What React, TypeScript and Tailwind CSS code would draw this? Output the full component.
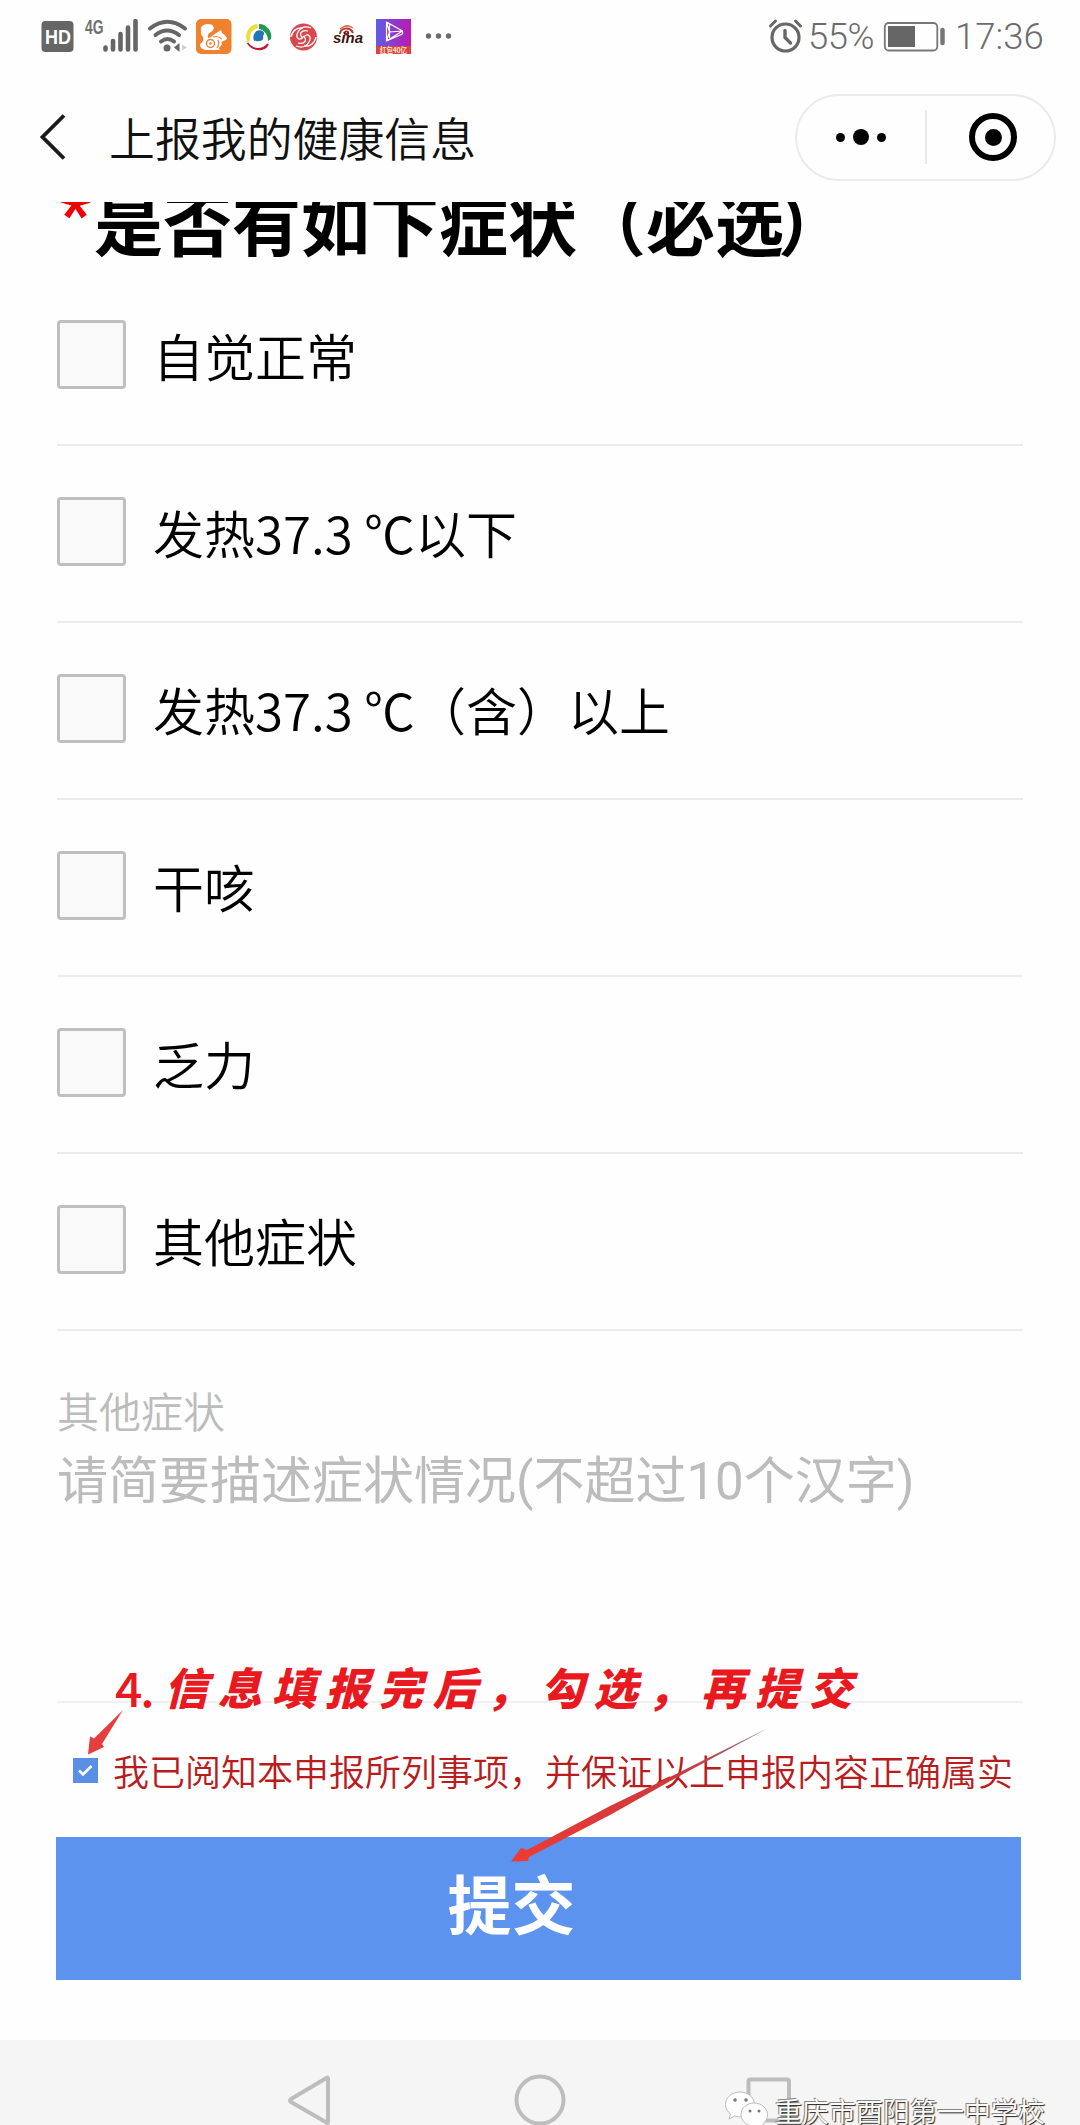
import React from 'react';

const SYMPTOMS = [
  '自觉正常',
  '发热37.3 ℃以下',
  '发热37.3 ℃（含）以上',
  '干咳',
  '乏力',
  '其他症状',
];

const StatusBar: React.FC = () => (
  <div className="h-[72px] shrink-0 flex items-start justify-between pl-[40px] pr-[34px]">
    <svg width="416" height="72" viewBox="40 0 416 72" fill="none">
      {/* HD */}
      <rect x="41.5" y="21" width="32" height="31" rx="4" fill="#666" />
      <text x="45" y="44" fontFamily="Liberation Sans" fontWeight="700" fontSize="21" fill="#fff" textLength="26" lengthAdjust="spacingAndGlyphs">HD</text>

      {/* Signal */}
      <text x="85" y="33.5" fontFamily="Liberation Sans" fontWeight="700" fontSize="20" fill="#707070" textLength="18.5" lengthAdjust="spacingAndGlyphs">4G</text>
      <g stroke="#666" strokeWidth="4.6" strokeLinecap="round">
        <path d="M105.5 47.5v2M113 41v8.5M120.500 34v15.500M128 27.500v22M135.500 21v28.500" />
      </g>

      {/* Wifi */}
      <g stroke="#666" strokeWidth="4" strokeLinecap="round">
        <path d="M150 28.500q17.500-13.500 35 0" />
        <path d="M155.500 35q11.500-9 23.500 0" />
        <path d="M161 41.500q6.500-5 13 0" />
      </g>
      <circle cx="167" cy="48" r="3.500" fill="#666" />
      <path d="M179.500 43v9l-5.500-4.500z" fill="#666" />
      <path d="M182 44.500v6l5-3z" fill="#d0d0d0" />

      {/* Squirrel browser */}
      <rect x="196" y="19" width="35.500" height="35" rx="5" fill="#ef812f" />
      <path d="M201 31c-1-4 2-7 7-7 5 0 7 3 5 6-1 2-4 2-5 5-1 3 1 4 3 2 3-3 7-5 10-7l1 3c3 2 5 4 5 6-2 2-4 1.500-5.500 3 1 3-1 4.500-3 6l1.500 2h-14c-4-.500-6.500-3-6-6 3-2 4-4 3-7-2-2-2.500-4-2-6z" fill="#fff" />
      <circle cx="210.500" cy="43.500" r="4" stroke="#ef812f" strokeWidth="1.400" />
      <circle cx="210.500" cy="43.500" r="1.300" fill="#ef812f" />
      <path d="M213 37c3-1 6-.500 9 2M218 40c1.500 3 1 5-1 8" stroke="#ef812f" strokeWidth="1.200" />

      {/* Three colour ring */}
      <path d="M247 42c-3-9 2-17 10-18l1 4c-6 1-9 7-8 13z" fill="#ecdf3c" />
      <path d="M259 24c8 0 14 8 12 15l-3 2c0-7-4-11-9-12z" fill="#259653" />
      <path d="M247.500 43c6 8 15 7 20.500 1l-1 2c-4 5-14 5-19.500-3z" fill="#bf1730" stroke="#bf1730" strokeWidth="1.500" />
      <path d="M253.500 39c-1-5 3-9.500 7.500-8.500 4 1 3.500 4 2 5.500 1 3-.500 5-4 5-3 .500-5.500 0-5.500-2z" fill="#2375b8" />

      {/* Red swirl */}
      <circle cx="303.500" cy="37" r="13.500" fill="#d9474f" />
      <g stroke="#fff" strokeWidth="1.300">
        <path d="M303 38c-5-3-2-9 5-7M303 36c5 3 2 9-5 7" />
        <path d="M304 37c4-5 8 0 5 5s-8 6-13 4M303 37c-4 5-8 0-5-5s8-6 13-4" />
        <path d="M291 37c1-6 6-10 12-9M316 37c-1 6-6 10-12 9" />
      </g>

      {/* Sina */}
      <path d="M340 34c0-6 10-8 13-1" stroke="#b83a2c" strokeWidth="2" />
      <path d="M340 29c4-3 9-4 13-1M344 26.500c2-1 4-1 6 0" stroke="#d7705a" strokeWidth="1.500" />
      <circle cx="346.500" cy="33" r="2.600" fill="#8f1d1d" />
      <circle cx="346" cy="32.500" r=".8" fill="#fff" />
      <text x="333" y="43" fontFamily="Liberation Sans" fontStyle="italic" fontWeight="700" fontSize="15" fill="#3c1712" textLength="30" lengthAdjust="spacingAndGlyphs">sina</text>

      {/* Video player */}
      <defs>
        <linearGradient id="player" x1="0" y1="0" x2="1" y2="0">
          <stop offset="0" stopColor="#5f5be6" />
          <stop offset="1" stopColor="#bd19b0" />
        </linearGradient>
      </defs>
      <rect x="376" y="19" width="35" height="35" fill="url(#player)" />
      <rect x="376" y="46" width="35" height="8" fill="#dc4143" />
      <g stroke="#fff" strokeWidth="1.200" strokeLinejoin="round">
        <path d="M386.500 22v19l16-10zM389.500 24v14M386.500 41l16-7v-3M386.500 22l3 10 13-1M386.500 41l3-9" />
      </g>
      <text x="380" y="53" fontFamily="Noto Sans CJK SC" fontWeight="700" fontSize="8" fill="#ffe6c9" textLength="27" lengthAdjust="spacingAndGlyphs">红包40亿</text>

      <g fill="#6b6b6b">
        <circle cx="428.500" cy="36" r="2.700" />
        <circle cx="438.500" cy="36" r="2.700" />
        <circle cx="448.500" cy="36" r="2.700" />
      </g>
    </svg>

    <div className="flex items-center h-[74px] text-[#6c6c6c] font-['Roboto',sans-serif] font-[350] text-[36.500px] leading-none">
      <svg width="36" height="38" viewBox="768 18 36 38" fill="none" stroke="#666" strokeLinecap="round">
        <circle cx="785.500" cy="37.500" r="13.500" strokeWidth="3.200" />
        <path d="M785 30.500v7l5.500 5.500" strokeWidth="3.400" />
        <path d="M770.500 26l5-5M800.500 26l-5-5" strokeWidth="3" />
      </svg>
      <span className="ml-[4px] w-[68px] tracking-[-0.500px]">55%</span>
      <svg className="ml-[7px]" width="64" height="32" viewBox="883 21 64 32" fill="none">
        <rect x="884.800" y="23" width="52.500" height="27.500" rx="4" stroke="#777" strokeWidth="1.800" />
        <rect x="888" y="26" width="27" height="21" fill="#666" />
        <path d="M942.500 30v13" stroke="#777" strokeWidth="4.500" strokeLinecap="round" />
      </svg>
      <span className="ml-[8px] w-[91px] whitespace-nowrap">17:36</span>
    </div>
  </div>
);

const NavBar: React.FC = () => (
  <div className="h-[130px] shrink-0 flex items-center justify-between pl-[38px] pr-[24px]">
    <div className="flex items-center">
      <svg width="30" height="50" viewBox="0 0 30 50" fill="none" stroke="#1a1a1a" strokeWidth="3.800">
        <path d="M26 3.500L4.500 25 26 46.500" />
      </svg>
      <h1 className="ml-[41px] -mt-[2px] text-[45.900px] leading-[60px] font-[350] text-[#111]">上报我的健康信息</h1>
    </div>
    <div className="w-[261px] h-[87px] rounded-full border-2 border-[#ebebeb] flex items-center">
      <div className="flex-1 flex items-center justify-center gap-[8px]">
        <i className="size-[9px] rounded-full bg-black" />
        <i className="size-[16px] rounded-full bg-black" />
        <i className="size-[9px] rounded-full bg-black" />
      </div>
      <div className="w-[2px] h-[54px] bg-[#e8e8e8]" />
      <div className="flex-1 flex items-center justify-center">
        <div className="size-[48px] rounded-full border-[6px] border-black flex items-center justify-center mr-[-6px]">
          <div className="size-[17px] rounded-full bg-black" />
        </div>
      </div>
    </div>
  </div>
);

const SystemKeys: React.FC = () => (
  <footer className="relative h-[85px] shrink-0 bg-[#f5f5f5] overflow-hidden">
    <svg width="1080" height="85" viewBox="0 2040 1080 85" fill="none" stroke="#bdbdbd" strokeWidth="4">
      <path d="M328 2078.500v44q0 1-1.500 0L291 2102q-2-1.500 0-3l35.500-21q1.500-1 1.500.500z" strokeLinejoin="round" />
      <circle cx="540" cy="2100" r="23.500" />
      <rect x="748.500" y="2079.500" width="40.500" height="41" rx="2" />
    </svg>
    {/* Account watermark */}
    <div className="absolute left-[724px] top-[50px] flex items-start">
      <svg width="46" height="40" viewBox="0 0 46 40" fill="#fff" stroke="#bbb" strokeWidth="1">
        <path d="M16 2C8 2 1.500 7.500 1.500 14.500c0 4 2 7 5 9.500l-1.500 5 5.500-3c11 3 20-2.500 20-11.500C30.500 7.500 24 2 16 2z" />
        <path d="M30 13c-7 0-13 5-13 11.500S23 36 30 36c2 0 3.500 0 5-.500l5 2.500-1-4c2.500-2 4.500-5 4.500-9.500C43.500 18 37 13 30 13z" />
        <g fill="#777" stroke="none">
          <circle cx="11" cy="10" r="1.800" />
          <circle cx="22" cy="10" r="1.800" />
          <circle cx="26" cy="21" r="1.500" />
          <circle cx="35" cy="21" r="1.500" />
        </g>
      </svg>
      <span className="mt-[6px] ml-[5px] text-[27px] leading-[29px] text-[#fafafa] whitespace-nowrap [text-shadow:1px_1px_1px_#222,-1px_-1px_0_#888]">重庆市酉阳第一中学校</span>
    </div>
  </footer>
);

const App: React.FC = () => {
  return (
    <div className="relative w-[1080px] h-[2125px] bg-[#fefefe] overflow-hidden flex flex-col text-black font-['Noto_Sans_CJK_SC',sans-serif]">
      <StatusBar />
      <NavBar />

      <main className="flex-1 overflow-hidden px-[57px]">
        {/* Question title, scrolled under the nav bar */}
        <h2 className="-mt-[25px] h-[92px] pb-[4px] pl-[3px] flex items-center text-[69px] leading-[88px] font-bold whitespace-nowrap">
          <span className="-mt-[12px] w-[34px] text-[#f00000] font-['Roboto',sans-serif] text-[68px]">*</span>
          <span>是否有如下症状（必选</span>
          <span className="-ml-[6px]">）</span>
        </h2>

        <ul>
          {SYMPTOMS.map((name) => (
            <li key={name} className="h-[177px] w-[966px] pb-[4px] border-b-2 border-[#ececec] flex items-center">
              <span className="size-[69px] shrink-0 rounded-[4px] border-[3px] border-[#bfbfbf] bg-[#f9f9f9]" />
              <span className="ml-[27px] text-[51px] leading-[60px] font-[350] whitespace-nowrap">{name}</span>
            </li>
          ))}
        </ul>

        <div className="h-[372px] w-[966px] border-b-2 border-[#f0f0f0] pt-[48px] text-[#bcbcbc]">
          <p className="text-[42px] leading-[62px] font-[350]">其他症状</p>
          <p className="mt-[6px] text-[51px] leading-[70px] whitespace-nowrap font-['Roboto','Noto_Sans_CJK_SC',sans-serif]">请简要描述症状情况(不超过10个汉字)</p>
        </div>

        <label className="mt-[42px] h-[50px] pl-[16px] flex items-center">
          <span className="size-[25px] bg-[#5990e6] flex items-center justify-center">
            <svg width="15" height="13" viewBox="0 0 15 13" fill="none" stroke="#fff" strokeWidth="2.600">
              <path d="M1 6.500l4 4L13.500 2" />
            </svg>
          </span>
          <span className="ml-[15px] text-[36px] leading-[50px] font-[350] text-[#b91c1c] whitespace-nowrap">我已阅知本申报所列事项，并保证以上申报内容正确属实</span>
        </label>

        <button className="mt-[42px] -ml-px block w-[965px] h-[143px] bg-[#5b93ee] pr-[54px] pb-[14px] text-[64px] leading-[129px] font-bold text-white">
          提交
        </button>
      </main>

      <SystemKeys />

      {/* Red guide notes over the form */}
      <div className="absolute left-[115px] top-[1656px] flex items-center h-[60px] text-[#e8191f] whitespace-nowrap">
        <span className="w-[49px] text-[48px] leading-[60px] font-medium tracking-[-2px]">4.</span>
        <span className="text-[44px] leading-[60px] font-black italic tracking-[9.700px]">信息填报完后，勾选，再提交</span>
      </div>
      <svg className="absolute left-0 top-[1700px]" width="1080" height="180" viewBox="0 1700 1080 180">
        <defs>
          <linearGradient id="tail" x1="1" y1="0" x2="0" y2="1">
            <stop offset="0" stopColor="#8a7078" />
            <stop offset=".35" stopColor="#c93a40" />
            <stop offset="1" stopColor="#f03a32" />
          </linearGradient>
        </defs>
        <path d="M123 1710L102 1744l2 3L88 1754.500l2-18 4 2z" fill="#e63e3e" />
        <path d="M768 1728L674 1779 610 1815 529 1857l-1 4-17 .500 10-13.500 6 2L610 1806l62-30z" fill="url(#tail)" />
      </svg>
    </div>
  );
};

export default App;
